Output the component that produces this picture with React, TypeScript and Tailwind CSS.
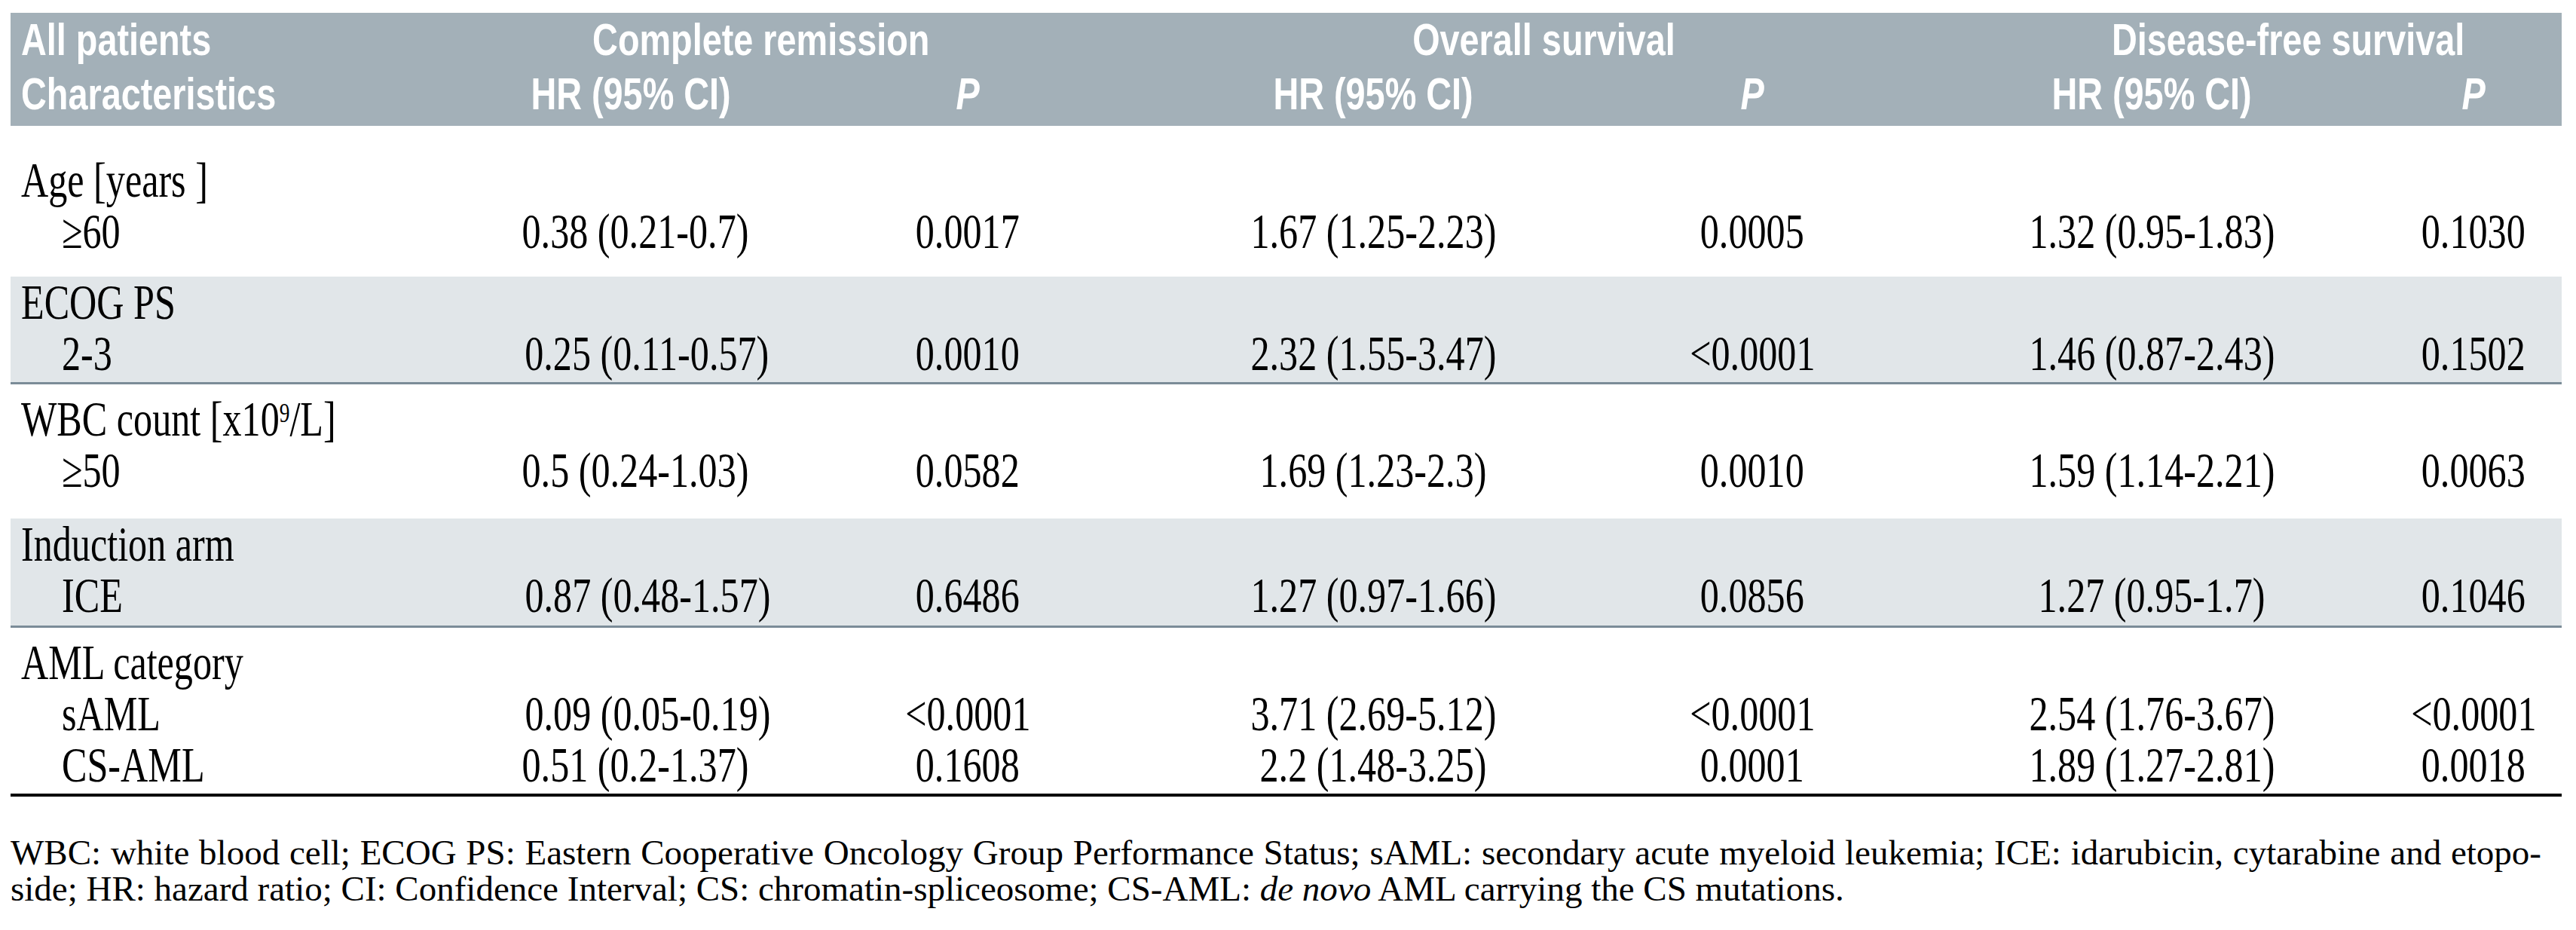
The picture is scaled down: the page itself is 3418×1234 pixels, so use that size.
import React from 'react';

interface DataRow {
  label: string;
  values: string[];
}

interface Group {
  title: React.ReactNode;
  rows: DataRow[];
  className: string;
}

const groups: Group[] = [
  {
    title: 'Age [years ]',
    className: 'bg-white pt-[38px] pb-[26px]',
    rows: [{ label: '≥60', values: ['0.38 (0.21-0.7)', '0.0017', '1.67 (1.25-2.23)', '0.0005', '1.32 (0.95-1.83)', '0.1030'] }],
  },
  {
    title: 'ECOG PS',
    className: 'bg-[#e1e6e9] pb-[4px] border-b-[3px] border-[#7b8c98]',
    rows: [{ label: '2-3', values: ['0.25 (0.11-0.57)', '0.0010', '2.32 (1.55-3.47)', '<0.0001', '1.46 (0.87-2.43)', '0.1502'] }],
  },
  {
    title: (
      <>
        WBC count [x10<sup className="text-[36px] leading-none">9</sup>/L]
      </>
    ),
    className: 'bg-white pt-[12px] pb-[30px]',
    rows: [{ label: '≥50', values: ['0.5 (0.24-1.03)', '0.0582', '1.69 (1.23-2.3)', '0.0010', '1.59 (1.14-2.21)', '0.0063'] }],
  },
  {
    title: 'Induction arm',
    className: 'bg-[#e1e6e9] pb-[6px] border-b-[3px] border-[#7b8c98]',
    rows: [{ label: 'ICE', values: ['0.87 (0.48-1.57)', '0.6486', '1.27 (0.97-1.66)', '0.0856', '1.27 (0.95-1.7)', '0.1046'] }],
  },
  {
    title: 'AML category',
    className: 'bg-white pt-[12px] pb-[4px] border-b-4 border-black',
    rows: [
      { label: 'sAML', values: ['0.09 (0.05-0.19)', '<0.0001', '3.71 (2.69-5.12)', '<0.0001', '2.54 (1.76-3.67)', '<0.0001'] },
      { label: 'CS-AML', values: ['0.51 (0.2-1.37)', '0.1608', '2.2 (1.48-3.25)', '0.0001', '1.89 (1.27-2.81)', '0.0018'] },
    ],
  },
];

const cols = 'grid grid-cols-[631px_384px_510px_566px_440px_620px_234px]';
const serif = "font-['Liberation_Serif','Times_New_Roman',serif]";
const sans = "font-['Liberation_Sans',Arial,sans-serif]";

function Head({ children, className = '' }: { children: React.ReactNode; className?: string }) {
  return (
    <div className={`h-[72px] leading-[72px] whitespace-nowrap ${className}`}>
      <span className={`inline-block scale-x-[0.78] ${className.includes('text-left') ? 'origin-left' : 'origin-center'}`}>
        {children}
      </span>
    </div>
  );
}

function Cell({ children, left = false, indent = false }: { children: React.ReactNode; left?: boolean; indent?: boolean }) {
  return (
    <div
      className={`h-[68px] leading-[68px] whitespace-nowrap ${
        left ? (indent ? 'text-left pl-[68px]' : 'text-left pl-[14px]') : 'text-center'
      }`}
    >
      <span className={`inline-block scale-x-[0.76] ${left ? 'origin-left' : 'origin-center'}`}>{children}</span>
    </div>
  );
}

export default function App() {
  return (
    <div className="w-[3418px] h-[1234px] bg-white pl-[14px] pt-[17px] text-black">
      <div className="w-[3385px]">
        {/* header band */}
        <div className={`bg-[#a3b0b8] pb-[6px] text-white font-bold text-[60px] ${sans}`}>
          <div className={cols}>
            <Head className="text-left pl-[14px]">All patients</Head>
            <Head className="col-span-2 text-center pr-[164px]">Complete remission</Head>
            <Head className="col-span-2 text-center pl-[12px]">Overall survival</Head>
            <Head className="col-span-2 text-center pl-[128px]">Disease-free survival</Head>
          </div>
          <div className={cols}>
            <Head className="text-left pl-[14px]">Characteristics</Head>
            <Head className="text-center">HR (95% CI)</Head>
            <Head className="text-center italic">P</Head>
            <Head className="text-center">HR (95% CI)</Head>
            <Head className="text-center italic">P</Head>
            <Head className="text-center">HR (95% CI)</Head>
            <Head className="text-center italic">P</Head>
          </div>
        </div>

        {/* body */}
        <div className={`text-[66px] ${serif}`}>
          {groups.map((g, gi) => (
            <div key={gi} className={g.className}>
              <div className={cols}>
                <Cell left>{g.title}</Cell>
              </div>
              {g.rows.map((r) => (
                <div key={r.label} className={cols}>
                  <Cell left indent>
                    {r.label}
                  </Cell>
                  {r.values.map((v, i) => (
                    <Cell key={i}>{v}</Cell>
                  ))}
                </div>
              ))}
            </div>
          ))}
        </div>

        {/* footnote */}
        <div className={`mt-[50px] text-[47px] leading-[48px] ${serif}`}>
          <p className="w-[3358px] text-justify [text-align-last:justify]">
            WBC: white blood cell; ECOG PS: Eastern Cooperative Oncology Group Performance Status; sAML: secondary acute
            myeloid leukemia; ICE: idarubicin, cytarabine and etopo-
          </p>
          <p>
            side; HR: hazard ratio; CI: Confidence Interval; CS: chromatin-spliceosome; CS-AML: <i>de novo</i> AML
            carrying the CS mutations.
          </p>
        </div>
      </div>
    </div>
  );
}
